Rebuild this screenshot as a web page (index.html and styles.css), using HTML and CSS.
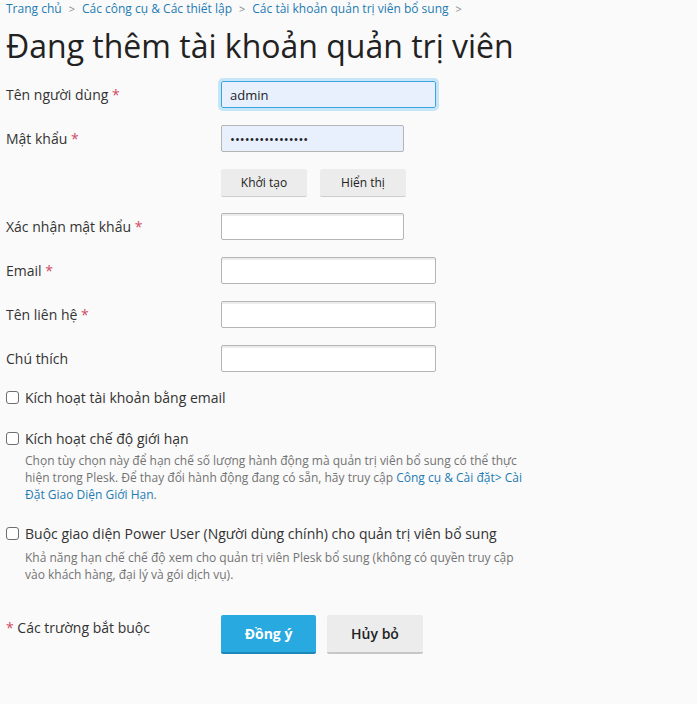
FILE: index.html
```html
<!DOCTYPE html>
<html lang="vi">
<head>
<meta charset="utf-8">
<title>Đang thêm tài khoản quản trị viên</title>
<link rel="stylesheet" href="styles.css">
</head>
<body>
<nav class="crumbs">
  <a href="#">Trang chủ</a><span class="sep">&gt;</span>
  <a href="#">Các công cụ &amp; Các thiết lập</a><span class="sep">&gt;</span>
  <a href="#">Các tài khoản quản trị viên bổ sung</a><span class="sep">&gt;</span>
</nav>
<h1 class="title">Đang thêm tài khoản quản trị viên</h1>
<form class="form">
  <div class="row">
    <label class="label">Tên người dùng <span class="req">*</span></label>
    <div class="field"><input class="input wide autofill focus" type="text" value="admin"></div>
  </div>
  <div class="row">
    <label class="label">Mật khẩu <span class="req">*</span></label>
    <div class="field"><input class="input narrow autofill" type="password" value="0123456789abcdef"></div>
  </div>
  <div class="row row-buttons">
    <div></div>
    <div class="field btns">
      <button type="button" class="btn small">Khởi tạo</button>
      <button type="button" class="btn small">Hiển thị</button>
    </div>
  </div>
  <div class="row">
    <label class="label">Xác nhận mật khẩu <span class="req">*</span></label>
    <div class="field"><input class="input narrow" type="password"></div>
  </div>
  <div class="row">
    <label class="label">Email <span class="req">*</span></label>
    <div class="field"><input class="input wide" type="text"></div>
  </div>
  <div class="row">
    <label class="label">Tên liên hệ <span class="req">*</span></label>
    <div class="field"><input class="input wide" type="text"></div>
  </div>
  <div class="row">
    <label class="label">Chú thích</label>
    <div class="field"><input class="input wide" type="text"></div>
  </div>

  <div class="check first">
    <span class="box"></span>
    <div class="check-body">
      <div class="check-label">Kích hoạt tài khoản bằng email</div>
    </div>
  </div>
  <div class="check second">
    <span class="box"></span>
    <div class="check-body">
      <div class="check-label">Kích hoạt chế độ giới hạn</div>
      <p class="hint">Chọn tùy chọn này để hạn chế số lượng hành động mà quản trị viên bổ sung có thể thực hiện trong Plesk. Để thay đổi hành động đang có sẵn, hãy truy cập <a href="#">Công cụ &amp; Cài đặt&gt; Cài Đặt Giao Diện Giới Hạn</a>.</p>
    </div>
  </div>
  <div class="check third">
    <span class="box"></span>
    <div class="check-body">
      <div class="check-label">Buộc giao diện Power User (Người dùng chính) cho quản trị viên bổ sung</div>
      <p class="hint hint-third">Khả năng hạn chế chế độ xem cho quản trị viên Plesk bổ sung (không có quyền truy cập vào khách hàng, đại lý và gói dịch vụ).</p>
    </div>
  </div>

  <div class="footer">
    <div class="req-note"><span class="req">*</span> Các trường bắt buộc</div>
    <div class="actions">
      <button type="button" class="btn primary">Đồng ý</button>
      <button type="button" class="btn big">Hủy bỏ</button>
    </div>
  </div>
</form>
</body>
</html>
```
FILE: styles.css
```css
html, body {
  margin: 0;
  background: #fafafa;
}
body {
  padding: 0 6px;
  font-family: "Open Sans", "Liberation Sans", sans-serif;
  color: #333;
  font-size: 14px;
}
.crumbs {
  font-size: 12px;
  line-height: 16px;
  padding-top: 1px;
  display: flex;
  align-items: center;
}
.crumbs a {
  color: #1f7bb3;
  text-decoration: none;
}
.sep {
  color: #888;
  margin: 0 7px;
  font-size: 11px;
}
.title {
  margin: 9px 0 0;
  font-size: 32px;
  font-weight: 400;
  line-height: 40px;
  color: #222;
}
.form {
  margin-top: 15px;
}
.row {
  display: grid;
  grid-template-columns: 215px 1fr;
  align-items: center;
  height: 27px;
  margin-bottom: 17px;
}
.label {
  font-size: 14px;
  color: #333;
}
.req {
  color: #d04a64;
}
.input {
  box-sizing: border-box;
  height: 27px;
  border: 1px solid #b5b5b5;
  border-radius: 2px;
  background: #fff;
  box-shadow: inset 0 2px 0 #ececec;
  font-family: "Open Sans", sans-serif;
  font-size: 13px;
  padding: 0 8px;
  color: #222;
  display: block;
}
.wide { width: 215px; }
.narrow { width: 183px; }
.autofill {
  background: #e8f0fe;
  box-shadow: none;
}
.focus {
  border-color: #3ba4dc;
  outline: 3px solid #c6e5f6;
  outline-offset: 0;
  border-radius: 2px;
}
.btns {
  display: flex;
  gap: 13px;
}
.btn {
  font-family: "Open Sans", sans-serif;
  color: #222;
  background: #ececec;
  border: none;
  border-bottom: 1px solid #cdcdcd;
  border-radius: 2px;
  cursor: pointer;
}
.btn.small {
  width: 86px;
  height: 28px;
  font-size: 12px;
}
.check {
  display: flex;
  align-items: flex-start;
  gap: 6px;
}
.check.first {
  margin-top: 11px;
}
.check.second {
  margin-top: 23px;
}
.check.third {
  margin-top: 22px;
}
.box {
  box-sizing: border-box;
  width: 13px;
  height: 13px;
  margin-top: 2px;
  border: 1px solid #6e6e6e;
  border-radius: 3px;
  background: #fff;
  flex: none;
}
.check-label {
  font-size: 14px;
  line-height: 18px;
  color: #333;
}
.hint {
  margin: 4px 0 0;
  font-size: 12px;
  line-height: 17px;
  color: #737373;
  width: 505px;
}
.hint-third {
  margin-top: 6px;
}
.hint a {
  color: #1f7bb3;
  text-decoration: none;
}
.footer {
  display: grid;
  grid-template-columns: 215px 1fr;
  margin-top: 32px;
  align-items: start;
}
.req-note {
  font-size: 14px;
  line-height: 18px;
  padding-top: 4px;
}
.actions {
  display: flex;
  gap: 11px;
}
.btn.primary {
  width: 95px;
  height: 39px;
  background: #28aae1;
  border-bottom: 2px solid #1c86b6;
  color: #fff;
  font-weight: 700;
  font-size: 14px;
}
.btn.big {
  width: 96px;
  height: 39px;
  font-weight: 600;
  font-size: 14px;
  border-bottom: 2px solid #c7c7c7;
}
```
